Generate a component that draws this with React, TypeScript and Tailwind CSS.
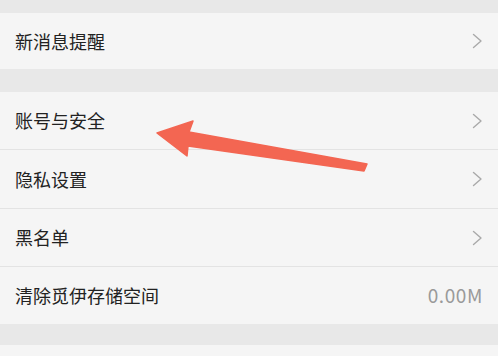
import React from "react";

const Chevron = () => (
  <svg width="11" height="16" viewBox="0 0 11 16" fill="none">
    <path d="M1.5 1.5 L9 8 L1.5 14.5" stroke="#a9a9a9" strokeWidth="1.4" strokeLinecap="round" strokeLinejoin="round" />
  </svg>
);

type RowProps = { label: string; value?: string; h: string; border?: boolean };

const Row = ({ label, value, h, border }: RowProps) => (
  <div className={`flex items-center justify-between bg-[#f5f5f5] pl-[15px] pr-[15px] ${h} ${border ? "border-b border-[#e3e3e3]" : ""}`}>
    <span className="text-[18px] text-[#222]">{label}</span>
    {value ? <span className="text-[19px] tracking-[0.6px] text-[#9a9a9a]">{value}</span> : <Chevron />}
  </div>
);

export default function App() {
  return (
    <div
      className="relative h-[356px] w-full overflow-hidden bg-[#e8e8e8] pt-[13px]"
      style={{ fontFamily: '"Noto Sans CJK SC", "Noto Sans", sans-serif' }}
    >
      <Row label="新消息提醒" h="h-[56px]" />
      <div className="h-[23px]" />
      <Row label="账号与安全" h="h-[58px]" border />
      <Row label="隐私设置" h="h-[59px]" border />
      <Row label="黑名单" h="h-[58px]" border />
      <Row label="清除觅伊存储空间" value="0.00M" h="h-[57px]" />
      <div className="h-[21px]" />
      <div className="h-[20px] bg-[#f5f5f5]" />

      <svg className="absolute left-0 top-0" width="498" height="356" viewBox="0 0 498 356">
        <polygon
          points="157,133 193,121 189,132 367,164 364,171 188,146 187,156"
          fill="#f36652"
          strokeLinejoin="round"
          stroke="#f36652"
          strokeWidth="1.5"
        />
      </svg>
    </div>
  );
}
